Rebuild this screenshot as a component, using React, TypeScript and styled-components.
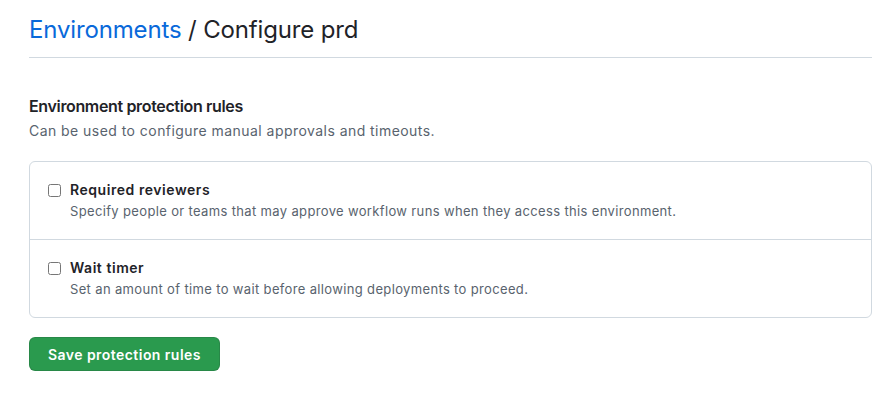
import React from 'react';
import styled, { createGlobalStyle } from 'styled-components';

const Global = createGlobalStyle`
  body {
    margin: 0;
    background: #ffffff;
    color: #1f2328;
    font-family: Inter, "Liberation Sans", Arial, sans-serif;
  }
`;

const Page = styled.div`
  padding: 15px 20px 0 29px;
`;

const Header = styled.div`
  border-bottom: 1px solid #d1d9e0;
  padding-bottom: 12px;
  margin-bottom: 36px;
`;

const Title = styled.h1`
  margin: 0;
  font-size: 24px;
  font-weight: 400;
  line-height: 30px;
  letter-spacing: -0.15px;
  color: #1f2328;
`;

const Crumb = styled.a`
  color: #0969da;
  text-decoration: none;
`;

const SectionTitle = styled.h2`
  margin: 0;
  font-size: 16px;
  font-weight: 600;
  line-height: 24px;
  letter-spacing: -0.35px;
`;

const SectionNote = styled.p`
  margin: 2px 0 20px;
  font-size: 14px;
  line-height: 21px;
  letter-spacing: 0.45px;
  color: #59636e;
`;

const RuleBox = styled.div`
  border: 1px solid #d1d9e0;
  border-radius: 6px;
`;

const Rule = styled.label`
  display: grid;
  grid-template-columns: 13px 1fr;
  column-gap: 9px;
  padding: 18px;
  & + & {
    border-top: 1px solid #d1d9e0;
  }
`;

const Check = styled.input`
  margin: 4px 0 0;
  width: 13px;
  height: 13px;
`;

const RuleName = styled.div`
  font-size: 14px;
  font-weight: 600;
  line-height: 20px;
  letter-spacing: 0.55px;
`;

const RuleText = styled.div`
  margin-top: 1px;
  font-size: 13px;
  line-height: 20px;
  letter-spacing: 0.35px;
  color: #59636e;
`;

const SaveButton = styled.button`
  margin-top: 19px;
  height: 34px;
  padding: 0 18px;
  border: 1px solid rgba(31, 35, 40, 0.15);
  border-radius: 6px;
  background: #2a9a4e;
  color: #ffffff;
  font-family: inherit;
  font-size: 14px;
  font-weight: 600;
  letter-spacing: 0.45px;
`;

const rules = [
  {
    name: 'Required reviewers',
    text: 'Specify people or teams that may approve workflow runs when they access this environment.',
  },
  {
    name: 'Wait timer',
    text: 'Set an amount of time to wait before allowing deployments to proceed.',
  },
];

export default function App() {
  return (
    <Page>
      <Global />
      <Header>
        <Title>
          <Crumb href="#">Environments</Crumb> / Configure prd
        </Title>
      </Header>
      <SectionTitle>Environment protection rules</SectionTitle>
      <SectionNote>Can be used to configure manual approvals and timeouts.</SectionNote>
      <RuleBox>
        {rules.map((r) => (
          <Rule key={r.name}>
            <Check type="checkbox" />
            <div>
              <RuleName>{r.name}</RuleName>
              <RuleText>{r.text}</RuleText>
            </div>
          </Rule>
        ))}
      </RuleBox>
      <SaveButton>Save protection rules</SaveButton>
    </Page>
  );
}
